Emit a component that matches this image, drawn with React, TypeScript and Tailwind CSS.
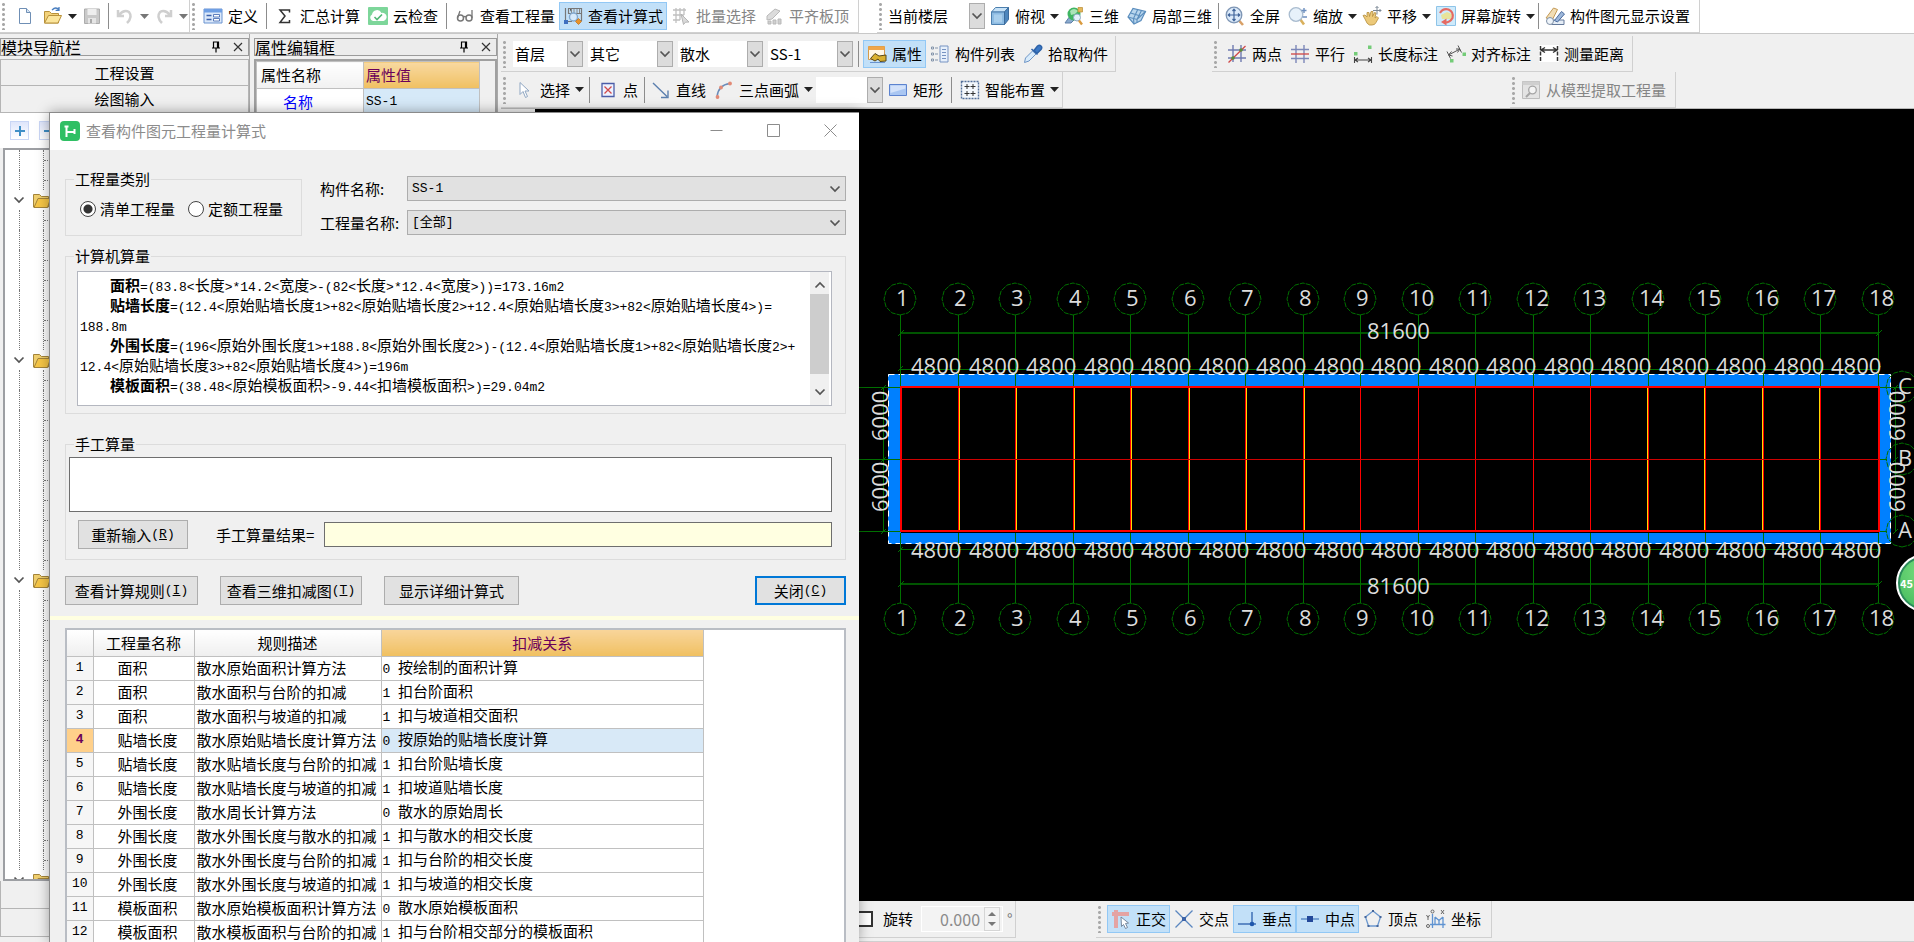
import { Fragment, type ReactNode } from "react";

/* ---------- icons (20 x 20 grid) ---------- */

const ICONS: Record<string, ReactNode> = {
  file: (
    <>
      <path d="M4.5 2.5h7l4 4v11h-11z" fill="#fff" stroke="#6f8fb5" />
      <path d="M11.5 2.5v4h4" fill="#d6e4f4" stroke="#6f8fb5" />
    </>
  ),
  folder: (
    <>
      <path d="M1.5 17V5.5h5l2 2h7V17z" fill="#f3d27a" stroke="#b8913a" />
      <path d="M1.5 17l4-7.5h13L15 17z" fill="#fbe59b" stroke="#b8913a" />
      <path d="M9 4q4-4 7 0m0-3v3.4h-3.4" fill="none" stroke="#4a7fc0" strokeWidth="1.3" />
    </>
  ),
  save: (
    <>
      <path d="M2.5 3h15v14.500h-15z" fill="#c9c9c9" stroke="#adadad" />
      <path d="M5.500 3h9v6h-9z" fill="#eee" />
      <path d="M6 12h8v5.500H6z" fill="#e6e6e6" />
      <path d="M8 13h2v4H8z" fill="#aaa" />
    </>
  ),
  undo: <path d="M3 4v6h6M4 9q5-6 10-3 4 5-2 11" fill="none" stroke="#cfcfcf" strokeWidth="2.500" />,
  redo: <path d="M17 4v6h-6M16 9Q11 3 6 6q-4 5 2 11" fill="none" stroke="#cfcfcf" strokeWidth="2.500" />,
  define: (
    <>
      <path d="M1 3h18v14H1z" fill="#dce9fa" stroke="#6a93d0" />
      <path d="M1 3h18v3.500H1z" fill="#6f9fe4" />
      <path d="M3.500 9.500h5m-5 4h5" stroke="#3b62ad" strokeWidth="1.600" />
      <path d="M10.500 8.500h6v2.500h-6zm0 4h6V15h-6z" fill="#fff" stroke="#3b62ad" strokeWidth=".8" />
    </>
  ),
  sigma: <path d="M14.500 6.500V4H5l5 6-5 6.500h9.500V14" fill="none" stroke="#333" strokeWidth="1.500" />,
  cloud: (
    <>
      <rect x="0" y="1" width="20" height="18" rx="1" fill="#7dd69a" />
      <path d="M5 15a3.500 3.500 0 0 1-1-6.500A5 5 0 0 1 13.500 7 4 4 0 0 1 15.500 15z" fill="#fff" />
      <path d="M6.500 11l2.500 2.500 5-5" fill="none" stroke="#53b877" strokeWidth="1.600" />
    </>
  ),
  glasses: (
    <>
      <circle cx="5.500" cy="12" r="3" fill="none" stroke="#777" strokeWidth="1.500" />
      <circle cx="14" cy="12" r="3" fill="none" stroke="#777" strokeWidth="1.500" />
      <path d="M2.500 12L5 5m3.500 6q1.500-1 2.500 0m6 1V4" fill="none" stroke="#777" strokeWidth="1.300" />
    </>
  ),
  viewcalc: (
    <>
      <path d="M2.500 2v15M1 15.500h8M5.500 2.500h13v5h-13zM18.500 7v8" fill="none" stroke="#777" strokeWidth="1.200" />
      <path d="M7 3h1.500v4M11 3v4m3-4v4m2.500-4v4" stroke="#8a8a8a" />
      <circle cx="10.500" cy="11" r="4" fill="#d7eafc" stroke="#84a9cf" strokeWidth="1.400" />
      <path d="M1 14h4v4H1z" fill="#3f6fc0" />
      <path d="M15.500 12.500l3 3-3 3-3-3z" fill="#e8922a" stroke="#b96a12" strokeWidth=".7" />
    </>
  ),
  batch: (
    <>
      <path d="M2 4h13M2 9h11M2 14h7M5 2v15m4-15v12m4-12v7" stroke="#c0c0c0" strokeWidth="1.300" />
      <path d="M10 8l8 8-3.500.2-2 2.300z" fill="#dadada" stroke="#b5b5b5" />
    </>
  ),
  align: (
    <>
      <path d="M3 10l8-7 5 2-8 8-5 1z" fill="#dcdcdc" stroke="#b9b9b9" />
      <path d="M4 15h3v3H4zm5-1h3v4H9zm5-1h3v5h-3z" fill="#cfcfcf" stroke="#b9b9b9" />
    </>
  ),
  cube: (
    <>
      <path d="M1.500 6l4-4.500h13l-4 4.500z" fill="#c7e2f7" stroke="#4c7fae" />
      <path d="M1.500 6h13v12.500h-13z" fill="#8dbbe2" stroke="#4c7fae" />
      <path d="M14.500 6l4-4.500v12l-4 5z" fill="#4d86bd" stroke="#3c6c9d" />
      <path d="M4 8.500h8v8H4z" fill="#b3d5f1" opacity=".7" />
    </>
  ),
  orbit: (
    <>
      <path d="M1 17l5-7 4 4-3 3z" fill="#8aaace" stroke="#5f7fa8" />
      <circle cx="10" cy="8" r="6.500" fill="#3fb562" />
      <path d="M6 5q4-4 8 0l-3 3-4 1z" fill="#a9e3b7" />
      <circle cx="13" cy="11.500" r="3.500" fill="#e3f1fb" stroke="#8fa9c2" />
      <path d="M15 14.500l3 4" stroke="#d99a3d" strokeWidth="2.400" />
      <path d="M14 1.500h4.500V6H14z" fill="#e4b85c" stroke="#b98a30" strokeWidth=".7" />
    </>
  ),
  part3d: (
    <>
      <path d="M1 11l5-8.500 12.500 3L14 14.500 7 18z" fill="#b9d6ee" stroke="#5a8dbd" strokeWidth="1.200" />
      <path d="M10.500 4l-4 8.500L7 18M1 11l9 2.500 8.500-8M14.500 4.500L10 13.500v3M3.500 7l10 3" fill="none" stroke="#5a8dbd" strokeWidth="1.100" />
    </>
  ),
  full: (
    <>
      <path d="M13.500 14l4.500 5" stroke="#d9a066" strokeWidth="2.600" />
      <circle cx="9" cy="9" r="7.800" fill="#dbeafa" stroke="#7d95b4" strokeWidth="1.300" />
      <path d="M9 3.500v11M3.500 9h11M7.500 5L9 3.200 10.500 5M7.500 13L9 14.800 10.500 13M5 7.500L3.200 9 5 10.500M13 7.500L14.800 9 13 10.500" fill="none" stroke="#41659b" strokeWidth="1.200" />
    </>
  ),
  zoom: (
    <>
      <path d="M12 13l4 5.500" stroke="#d9b05c" strokeWidth="2.600" />
      <circle cx="8" cy="8.500" r="6.800" fill="#e7f1fa" stroke="#a9bccf" strokeWidth="1.300" />
      <path d="M16 2v5m-2.500-2.500h5M14.500 11H19" stroke="#6d8fbf" strokeWidth="1.400" />
    </>
  ),
  pan: (
    <>
      <path d="M3 13L1 9.500l2-.5 2 2V6.500h2l.5 4 1.500-5h2l-.500 5 2-4 1.500.5-1 5 2-1.500 1.500 1.500-2.500 4.500q-1 2.500-4 2.500H7.500Q5 18.500 3 13z" fill="#ecc979" stroke="#b48d3c" strokeWidth=".8" />
      <path d="M15 .5v8M11 4.500h8M13.500 2L15 .5 16.500 2M17.500 3L19 4.500 17.500 6" fill="none" stroke="#7b8794" />
    </>
  ),
  rotate: (
    <>
      <path d="M.5.5h19v19H.5z" fill="#cfeafb" stroke="#8ec4e8" />
      <path d="M5 9l6-3 5 2-1 5H6z" fill="#e8e39a" />
      <path d="M4 7Q7 2 12.500 3.500 18 6 16.500 12 14 16.500 9 16.500" fill="none" stroke="#e66a62" strokeWidth="2.200" />
      <path d="M10.500 12.500v7L5 16z" fill="#e66a62" />
    </>
  ),
  display: (
    <>
      <path d="M1 12L8.500 2l4 1.500-5 10z" fill="#f2ddb4" stroke="#c39a57" />
      <path d="M6.500 14H19v4.500H6.500z" fill="#e5edf6" stroke="#64799a" />
      <path d="M9.500 14.500l7-9 3 2.500-7 8z" fill="#9db7da" stroke="#4c6c9e" />
      <circle cx="5" cy="15" r="3.500" fill="#eef4fa" stroke="#7e8fa5" />
    </>
  ),
  props: (
    <>
      <path d="M1.500 2.500h16v13h-16z" fill="#fff7e6" stroke="#d59b4b" />
      <path d="M1.500 2.500h16V6h-16z" fill="#f0a64a" />
      <path d="M3.500 14.500l4.500-5 4 2.500 7-1v6l-6 .5-2-2.500-3 2z" fill="#d9b02f" stroke="#57481a" />
      <path d="M3 18.500h15" stroke="#6a94cf" />
    </>
  ),
  list: (
    <>
      <path d="M10 2h8v16h-8z" fill="#e7f0fb" stroke="#7793c2" />
      <path d="M12 5.500h4m-4 3h4m-4 3h4m-4 3h4" stroke="#7793c2" />
      <path d="M1.500 3h2v2h-2zm0 6h2v2h-2zm0 6h2v2h-2zM5 4h3m-3 6h3m-3 6h3" fill="none" stroke="#8394ab" />
    </>
  ),
  picker: (
    <>
      <path d="M1.500 18.500l1-4.500 7-7 3.500 3-7 7z" fill="#d8ebfb" stroke="#6e95c6" />
      <path d="M8.500 5l6 5.500M11 6.500l3.500-4.500q2-1.500 3.500 0t0 3.500L14 9.500z" fill="#3b78c5" stroke="#2d62a8" strokeWidth="1.500" />
    </>
  ),
  twopoint: (
    <>
      <path d="M6 1v17m8-17v17M1 6h18M1 14h18" stroke="#6f7bb0" strokeWidth="1.400" />
      <path d="M1.500 18.500L18.500 2" stroke="#cf4747" strokeWidth="1.300" />
      <circle cx="6" cy="14" r="1.800" fill="#5a8c3a" />
      <circle cx="14" cy="6" r="1.800" fill="#5a8c3a" />
    </>
  ),
  parallel: (
    <>
      <path d="M6 1v18m8-18v18M1 5.500h18M1 14.500h18" stroke="#7c87b8" strokeWidth="1.400" />
      <path d="M1 10h18" stroke="#d04f4f" strokeWidth="1.400" />
    </>
  ),
  length: (
    <>
      <path d="M1 8h3.500v3.500H1zM15 1.500h3.500V5H15z" fill="#74cc78" />
      <path d="M1.500 13v6m17-6v6M2 16h16M5 14l-3 2 3 2m10-4l3 2-3 2" fill="none" stroke="#444" strokeWidth="1.100" />
    </>
  ),
  aligned: (
    <>
      <path d="M1 7.500l3.500 7M12 1.500l3.500 7M2.500 11L14 5M5.500 7.500l-3 3.500 4 1M10 5l4 0-2.500 3.500" fill="none" stroke="#555" />
      <path d="M4 15h3.500v3.500H4zM16.500 8.500H20V12h-3.500z" fill="#74cc78" />
    </>
  ),
  measure: (
    <>
      <path d="M0 1h20v17H0z" fill="#fff" />
      <path d="M1.500 2v16m17-16v16" stroke="#333" strokeWidth="1.500" strokeDasharray="4 1.500" />
      <path d="M2 6h16M6 3.500L2 6l4 2.500m8-5L18 6l-4 2.500" fill="none" stroke="#333" strokeWidth="1.400" />
    </>
  ),
  cursor: <path d="M5 2.500v12l3-3 2.500 6 2-1-2.500-5.500h4z" fill="#fff" stroke="#8fa6c2" />,
  point: (
    <>
      <path d="M4 3.500h12v13H4z" fill="#eef2ff" stroke="#4b5da8" strokeWidth="1.300" />
      <path d="M6.500 6.500l7 7m0-7l-7 7" stroke="#d24a4a" strokeWidth="1.300" />
    </>
  ),
  line: <path d="M2 3l14 13.500M17 10.500V17.500H10" fill="none" stroke="#5b7fae" strokeWidth="1.400" />,
  arc: (
    <>
      <path d="M3 17Q4 5 16 3.500" fill="none" stroke="#6a8bb8" strokeWidth="1.500" />
      <circle cx="3.500" cy="17" r="1.900" fill="#e28a76" />
      <circle cx="7" cy="7.500" r="1.900" fill="#e28a76" />
      <circle cx="16" cy="3.500" r="1.900" fill="#e28a76" />
    </>
  ),
  rect: (
    <>
      <path d="M1.500 4.500h17v11h-17z" fill="#a9c6f2" stroke="#5c83cf" />
      <path d="M2.500 5.500h15v3L2.500 13z" fill="#d3e2fa" />
    </>
  ),
  smart: (
    <>
      <path d="M1.500 1.500h17v17h-17z" fill="#f4f8fd" stroke="#55719b" strokeWidth="1.400" strokeDasharray="2 1" />
      <path d="M7 4v5m-2.500-2.500h5M13 4v5m-2.500-2.500h5M7 11v5m-2.500-2.500h5M13 11v5m-2.500-2.500h5" stroke="#333" />
    </>
  ),
  extract: (
    <>
      <path d="M1.500 1.500h17v17h-17z" fill="#e3e3e3" stroke="#bdbdbd" />
      <path d="M1.500 1.500h17V5h-17z" fill="#cfcfcf" />
      <circle cx="11.500" cy="10" r="3.800" fill="#f4f4f4" stroke="#a5a5a5" strokeWidth="1.300" />
      <path d="M9 13l-4 4" stroke="#a5a5a5" strokeWidth="2" />
    </>
  ),
  ortho: (
    <>
      <path d="M1 5h17M5 1v18" stroke="#e4a3a3" strokeWidth="4" />
      <path d="M10 8l7.500 6-3 .5 2 4-2 1-2-4-2 2z" fill="#fff" stroke="#6c7c92" strokeWidth=".9" />
    </>
  ),
  cross: (
    <>
      <path d="M1.500 1.500l17 17M18.500 1.500l-17 17" stroke="#5b87c0" strokeWidth="1.300" />
      <path d="M8 8h4v4H8z" fill="#3d64a8" />
    </>
  ),
  perp: (
    <>
      <path d="M1 15h18M15 3v12" stroke="#3f6fb5" strokeWidth="1.500" />
      <circle cx="15" cy="15" r="2.300" fill="#1f57ad" />
    </>
  ),
  mid: (
    <>
      <path d="M1 10h18" stroke="#5080c0" strokeWidth="1.300" />
      <path d="M7 7h6v6H7z" fill="#23489a" />
    </>
  ),
  vertex: (
    <>
      <path d="M10 2l7.500 6-3 9h-9l-3-9z" fill="none" stroke="#6c98cf" strokeWidth="1.300" />
      <path d="M9 1h2v2H9zM1.500 7h2v2h-2zm15 0h2v2h-2zM4.500 16h2v2h-2zm9 0h2v2h-2z" fill="#44659a" />
    </>
  ),
  coord: (
    <>
      <path d="M6.500 5v14M4 15.500h15.500M9 8l4 3.500L17 8M13 11.500v4M9 8v8m8-8v11" fill="none" stroke="#5f93d1" strokeWidth="1.300" />
      <circle cx="6.500" cy="2.500" r="1.500" fill="none" stroke="#666" />
      <circle cx="2" cy="17" r="1.500" fill="none" stroke="#666" />
      <path d="M15 1l3 4m0-4l-3 4M.5 6L2 8.500 3.500 6M2 8.500V11" stroke="#666" fill="none" />
    </>
  ),
};

function Icon({ name }: { name: string }) {
  return (
    <svg viewBox="0 0 20 20" className="size-5 shrink-0" aria-hidden="true">
      {ICONS[name]}
    </svg>
  );
}

function Caret({ dim = false }: { dim?: boolean }) {
  return (
    <svg viewBox="0 0 9 5" className="h-[5px] w-[9px] shrink-0" aria-hidden="true">
      <path d="M0 0h9L4.500 5z" fill={dim ? "#777" : "#222"} />
    </svg>
  );
}

function Chevron() {
  return (
    <svg viewBox="0 0 12 8" className="h-2 w-3 shrink-0" aria-hidden="true">
      <path d="M1.500 1.500L6 6l4.500-4.500" fill="none" stroke="#555" strokeWidth="1.700" />
    </svg>
  );
}

/* ---------- toolbar pieces ---------- */

const Grip = () => <span className="mx-[2px] h-7 w-[3px] shrink-0 bg-[radial-gradient(circle,#a8a8a8_1px,transparent_2px)] bg-[length:3px_5px]" />;

function Sep({ tight = false }: { tight?: boolean }) {
  return <span className={`h-[26px] w-px shrink-0 bg-[#8c8c8c] ${tight ? "mx-[2px]" : "mx-1"}`} />;
}

function Tool({ icon, label, active, disabled, menu }: { icon: string; label?: string; active?: boolean; disabled?: boolean; menu?: boolean }) {
  const tone = active ? "bg-[#c2e0f8] border-[#92c8f5]" : "border-transparent";
  return (
    <button
      type="button"
      disabled={disabled}
      aria-label={label ?? icon}
      className={`flex h-7 shrink-0 items-center gap-[5px] border pl-[3px] ${menu ? "pr-0" : "pr-[3px]"} ${tone} ${disabled ? "text-[#858585]" : "text-black"}`}
    >
      <Icon name={icon} />
      {label && <span>{label}</span>}
      {menu && <Caret dim={disabled} />}
    </button>
  );
}

function Combo({ label, options, width }: { label: string; options: string[]; width: string }) {
  return (
    <div className={`relative mr-[5px] flex h-[26px] shrink-0 bg-white ${width}`}>
      <select aria-label={label} className="min-w-0 flex-1 appearance-none bg-transparent pl-[2px] outline-none">
        {options.map((o) => (
          <option key={o}>{o}</option>
        ))}
      </select>
      <span className="pointer-events-none flex w-4 shrink-0 items-center justify-center border border-[#adadad] bg-[#dcdcdc]">
        <Chevron />
      </span>
    </div>
  );
}

function Bar({ children, className = "" }: { children: ReactNode; className?: string }) {
  return <div className={`flex shrink-0 items-center border-r border-b border-[#d0d0d0] ${className}`}>{children}</div>;
}

function TopToolbar() {
  return (
    <div role="toolbar" aria-label="主工具栏" className="flex h-[34px] shrink-0 border-b border-[#c8c8c8] bg-white">
      <Bar className="w-[190px]">
        <Grip />
        <span className="w-1" />
        <Tool icon="file" />
        <Tool icon="folder" menu />
        <Tool icon="save" disabled />
        <Sep tight />
        <Tool icon="undo" disabled menu />
        <Tool icon="redo" disabled menu />
      </Bar>
      <Bar className="w-[669px]">
        <Grip />
        <span className="w-[2px]" />
        <Tool icon="define" label="定义" />
        <Sep />
        <Tool icon="sigma" label="汇总计算" />
        <Tool icon="cloud" label="云检查" />
        <Sep />
        <Tool icon="glasses" label="查看工程量" />
        <Tool icon="viewcalc" label="查看计算式" active />
        <Tool icon="batch" label="批量选择" disabled />
        <Tool icon="align" label="平齐板顶" disabled />
      </Bar>
      <Bar className="ml-[18px] w-[823px]">
        <Grip />
        <span className="w-[2px]" />
        <Combo label="楼层范围" options={["当前楼层", "全部楼层"]} width="w-[99px]" />
        <div className="-ml-1 flex items-center">
          <Tool icon="cube" label="俯视" menu />
          <Tool icon="orbit" label="三维" />
          <Tool icon="part3d" label="局部三维" />
          <Sep tight />
          <Tool icon="full" label="全屏" />
          <Tool icon="zoom" label="缩放" menu />
          <Tool icon="pan" label="平移" menu />
          <Tool icon="rotate" label="屏幕旋转" menu />
          <Sep tight />
          <Tool icon="display" label="构件图元显示设置" />
        </div>
      </Bar>
    </div>
  );
}

function CanvasToolbars() {
  return (
    <div className="flex shrink-0 flex-col bg-[#f0f0f0]">
      <div role="toolbar" aria-label="构件工具栏" className="mt-[2px] flex h-[36px]">
        <Bar className="w-[615px]">
          <Grip />
          <span className="w-[5px]" />
          <Combo label="楼层" options={["首层"]} width="w-[70px]" />
          <Combo label="类别" options={["其它"]} width="w-[85px]" />
          <Combo label="类型" options={["散水"]} width="w-[85px]" />
          <Combo label="构件" options={["SS-1"]} width="w-[85px]" />
          <span className="mr-1 h-[26px] w-px bg-[#8c8c8c]" />
          <Tool icon="props" label="属性" active />
          <Tool icon="list" label="构件列表" />
          <Tool icon="picker" label="拾取构件" />
        </Bar>
        <Bar className="ml-[96px] w-[421px]">
          <Grip />
          <span className="w-1" />
          <Tool icon="twopoint" label="两点" />
          <Tool icon="parallel" label="平行" />
          <Tool icon="length" label="长度标注" />
          <Tool icon="aligned" label="对齐标注" />
          <Tool icon="measure" label="测量距离" />
        </Bar>
      </div>
      <div role="toolbar" aria-label="绘图工具栏" className="flex h-[37px] border-b border-[#b8b8b8]">
        <Bar className="w-[562px]">
          <Grip />
          <span className="w-[3px]" />
          <Tool icon="cursor" label="选择" menu />
          <Sep />
          <Tool icon="point" label="点" />
          <Sep tight />
          <Tool icon="line" label="直线" />
          <Tool icon="arc" label="三点画弧" menu />
          <Combo label="画弧方式" options={[""]} width="ml-[2px] w-[67px]" />
          <div className="-ml-1 flex items-center">
            <Tool icon="rect" label="矩形" />
            <Sep />
            <Tool icon="smart" label="智能布置" menu />
          </div>
        </Bar>
        <Bar className="ml-[447px] w-[166px]">
          <Grip />
          <Tool icon="extract" label="从模型提取工程量" disabled />
        </Bar>
      </div>
    </div>
  );
}

/* ---------- left docks ---------- */

function DockTitle({ children }: { children: string }) {
  return (
    <div className="flex h-[18px] shrink-0 items-center gap-3 border border-[#9b9b9b] bg-[#ececec] pr-[5px]">
      <h2 className="flex-1 text-base leading-4">{children}</h2>
      <button type="button" aria-label="固定">
        <svg viewBox="0 0 10 12" className="h-3 w-[10px]">
          <path d="M2.500 1h5v6h-5zM1 7h8M5 7v4.500M6.500 1v6" fill="none" stroke="#000" strokeWidth="1.200" />
        </svg>
      </button>
      <button type="button" aria-label="关闭面板">
        <svg viewBox="0 0 10 10" className="size-[10px]">
          <path d="M1 1l8 8M9 1L1 9" stroke="#333" strokeWidth="1.200" />
        </svg>
      </button>
    </div>
  );
}

function TreeFolder() {
  return (
    <li className="flex h-5 items-center">
      <span className="mx-2 flex w-3 justify-center">
        <Chevron />
      </span>
      <svg viewBox="0 0 18 15" className="h-[15px] w-[18px] shrink-0" aria-hidden="true">
        <path d="M.5 14V1.500h6l2 2h7V14z" fill="#f0cf6e" stroke="#a5853a" />
        <path d="M1 14.500l4-9h12.500l-3 9z" fill="#f6c646" stroke="#a5853a" />
      </svg>
    </li>
  );
}

function TreeLeaves({ count }: { count: number }) {
  return (
    <>
      {Array.from({ length: count }, (_, i) => (
        <li key={i} className="ml-[14px] flex h-5 border-l border-dotted border-[#777]">
          <span className="ml-[23px] h-full border-l border-dotted border-[#777]" />
          <span className="mt-[10px] h-px w-3 border-t border-dotted border-[#777]" />
        </li>
      ))}
    </>
  );
}

const TREE_GROUPS = [7, 10, 14];

function PlusBox({ minus = false }: { minus?: boolean }) {
  return (
    <button type="button" aria-label={minus ? "折叠" : "展开"} className="flex size-[19px] items-center justify-center border border-[#c9d6f5] bg-linear-to-b from-[#dfe6fb] to-white">
      <svg viewBox="0 0 12 12" className="size-3">
        <path d={minus ? "M1 6h10" : "M1 6h10M6 1v10"} stroke="#3f8fc6" strokeWidth="2" />
      </svg>
    </button>
  );
}

function NavDock() {
  return (
    <aside className="flex w-[250px] shrink-0 flex-col border-r border-[#a9a9a9] pt-[4px]">
      <DockTitle>模块导航栏</DockTitle>
      <button type="button" className="mt-[3px] h-[27px] shrink-0 border border-[#b5b5b5] bg-[#f0f0f0]">
        工程设置
      </button>
      <button type="button" className="h-[27px] shrink-0 border border-t-0 border-[#b5b5b5] bg-[#f0f0f0]">
        绘图输入
      </button>
      <div className="flex h-[35px] shrink-0 gap-[10px] bg-white pt-2 pl-[10px]">
        <PlusBox />
        <PlusBox minus />
      </div>
      <ul className="ml-[3px] min-h-0 flex-1 overflow-hidden border-2 border-[#9d9fa3] bg-white">
        <TreeLeaves count={2} />
        {TREE_GROUPS.map((n, i) => (
          <Fragment key={i}>
            <TreeFolder />
            <TreeLeaves count={n} />
          </Fragment>
        ))}
        <TreeFolder />
      </ul>
      <div className="h-7 shrink-0 border border-t-0 border-[#b5b5b5]" />
      <div className="h-7 shrink-0 border border-t-0 border-[#b5b5b5]" />
      <div className="h-[5px] shrink-0" />
    </aside>
  );
}

function PropertyDock() {
  return (
    <aside className="ml-1 flex w-[244px] shrink-0 flex-col border-r border-[#a9a9a9] pt-[4px]">
      <DockTitle>属性编辑框</DockTitle>
      <div className="mt-[3px] flex-1 border-2 border-[#a0a0a0] bg-[#f0f0f0]">
        <table className="w-[224px] table-fixed border-collapse bg-white text-left">
          <thead>
            <tr className="h-[27px]">
              <th className="w-[107px] border border-[#c0c0c0] bg-linear-to-b from-white to-[#f1f1f1] pl-1 font-normal">属性名称</th>
              <th className="border border-[#c0c0c0] bg-linear-to-b from-[#f8d9a0] to-[#f0c060] pl-[2px] font-normal text-[#6a005a]">属性值</th>
            </tr>
          </thead>
          <tbody>
            <tr className="h-[26px]">
              <td className="border border-[#c0c0c0] pl-[26px] text-[#0000ff]">名称</td>
              <td className="border border-[#c0c0c0] bg-[#d6e9f8] pl-[2px] font-['Liberation_Mono',monospace] text-[13px]">SS-1</td>
            </tr>
          </tbody>
        </table>
      </div>
    </aside>
  );
}

/* ---------- drawing ---------- */

const AXES = Array.from({ length: 18 }, (_, i) => ({ n: i + 1, x: Math.round(900.3 + i * 57.5) }));
const ROWS = [
  { name: "C", y: 387 },
  { name: "B", y: 459 },
  { name: "A", y: 531 },
];

function dodecagon(cx: number, cy: number) {
  return Array.from({ length: 12 }, (_, k) => {
    const a = (k * Math.PI) / 6;
    return `${(cx + 16 * Math.sin(a)).toFixed(1)},${(cy + 16 * Math.cos(a)).toFixed(1)}`;
  }).join(" ");
}

function Drawing() {
  return (
    <svg className="absolute inset-0 h-full w-full" fill="none" role="img" aria-label="散水平面图">
      <g transform="translate(-535 -109)">
        <path d="M888 374H1891V544H888zM901 387V533H1879V387z" fill="#0080ff" fillRule="evenodd" />
        <path d="M888.500 374.500H1890.500V543.500H888.500z" stroke="#fff" strokeDasharray="6 4" />

        <g stroke="#007000">
          {AXES.map(({ n, x }) => (
            <Fragment key={n}>
              <path d={`M${x}.5 315V387M${x}.5 533V603`} />
              <path d={`M${x - 2} 371l5-5M${x - 2} 552l5-5`} />
              <polygon points={dodecagon(x, 299)} strokeDasharray="5 1" />
              <polygon points={dodecagon(x, 619)} strokeDasharray="5 1" />
            </Fragment>
          ))}
          <path d="M901 333H1879M901 584H1879" strokeWidth="1.500" />
          <path d="M901 369.500H1879M901 549.500H1879" />
          <path d="M898 336l6-6M1876 336l6-6M898 587l6-6M1876 587l6-6" />
          <path d="M883.500 387V531M1895.500 387V531" />
          {ROWS.map(({ name, y }) => (
            <Fragment key={name}>
              <path d={`M859 ${y}.5H901M1879 ${y}.5H1887M881 ${y + 3}l5-5M1893 ${y + 3}l5-5`} />
              <polygon points={dodecagon(1902, y)} strokeDasharray="5 1" />
            </Fragment>
          ))}
          <path d="M1887 387.500H1914" />
        </g>

        {AXES.slice(1, 17).map(({ n, x }) => (
          <Fragment key={n}>
            {n <= 8 && <path d={`M${x + 1}.5 387V530`} stroke="#ffd800" />}
            {n >= 14 && <path d={`M${x - 1}.5 387V530`} stroke="#ffd800" />}
            <path d={`M${x}.5 387V530`} stroke="#ff0000" />
          </Fragment>
        ))}
        <path d="M901 387H1879V531H901z" stroke="#f00" strokeWidth="2" />
        <path d="M901 459.500H1879" stroke="#d00000" />

        <g fill="#dcdcdc" fontFamily="'Open Sans','Noto Sans',sans-serif" fontSize="22">
          {AXES.map(({ n, x }) => (
            <Fragment key={n}>
              <text x={n < 10 ? x - 4 : x - 9} y="306">{n}</text>
              <text x={n < 10 ? x - 4 : x - 9} y="626">{n}</text>
              {n < 18 && (
                <>
                  <text x={x + 11} y="374">4800</text>
                  <text x={x + 11} y="558">4800</text>
                </>
              )}
            </Fragment>
          ))}
          <text x="1367" y="339">81600</text>
          <text x="1367" y="594">81600</text>
          {ROWS.map(({ name, y }) => (
            <text key={name} x="1898" y={y + 7}>{name}</text>
          ))}
          <text transform="translate(888 441) rotate(-90)">6000</text>
          <text transform="translate(888 512) rotate(-90)">6000</text>
          <text transform="translate(1905 441) rotate(-90)">6000</text>
          <text transform="translate(1905 512) rotate(-90)">6000</text>
        </g>
      </g>
    </svg>
  );
}

function StatusBar() {
  return (
    <div className="flex h-[41px] shrink-0 border-b border-[#d0d0d0] bg-[#f0f0f0] pb-[3px]">
      <Bar className="w-[515px] pl-[356px]">
        <label className="flex items-center gap-[10px]">
          <input type="checkbox" className="size-4 appearance-none border-2 border-[#333] bg-white" />
          旋转
        </label>
        <div className="ml-2 flex h-[26px] w-[82px] border border-white bg-[#f3f3f3]">
          <input aria-label="旋转角度" defaultValue="0.000" disabled className="w-[62px] bg-transparent pr-1 text-right text-base text-[#8a8a8a]" />
          <span className="flex w-4 flex-col items-center justify-center gap-[6px] border border-[#d5d5d5]">
            <svg viewBox="0 0 8 4" className="h-1 w-2"><path d="M0 4h8L4 0z" fill="#777" /></svg>
            <svg viewBox="0 0 8 4" className="h-1 w-2"><path d="M0 0h8L4 4z" fill="#777" /></svg>
          </span>
        </div>
        <span className="ml-1 text-[#777]">°</span>
      </Bar>
      <Bar className="ml-[80px] w-[396px]">
        <Grip />
        <span className="w-1" />
        <Tool icon="ortho" label="正交" active />
        <Tool icon="cross" label="交点" />
        <Tool icon="perp" label="垂点" active />
        <Tool icon="mid" label="中点" active />
        <Tool icon="vertex" label="顶点" />
        <Tool icon="coord" label="坐标" />
      </Bar>
    </div>
  );
}

/* ---------- dialog ---------- */

const RULES: [string, string, string][] = [
  ["面积", "散水原始面积计算方法", "0 按绘制的面积计算"],
  ["面积", "散水面积与台阶的扣减", "1 扣台阶面积"],
  ["面积", "散水面积与坡道的扣减", "1 扣与坡道相交面积"],
  ["贴墙长度", "散水原始贴墙长度计算方法", "0 按原始的贴墙长度计算"],
  ["贴墙长度", "散水贴墙长度与台阶的扣减", "1 扣台阶贴墙长度"],
  ["贴墙长度", "散水贴墙长度与坡道的扣减", "1 扣坡道贴墙长度"],
  ["外围长度", "散水周长计算方法", "0 散水的原始周长"],
  ["外围长度", "散水外围长度与散水的扣减", "1 扣与散水的相交长度"],
  ["外围长度", "散水外围长度与台阶的扣减", "1 扣与台阶的相交长度"],
  ["外围长度", "散水外围长度与坡道的扣减", "1 扣与坡道的相交长度"],
  ["模板面积", "散水原始模板面积计算方法", "0 散水原始模板面积"],
  ["模板面积", "散水模板面积与台阶的扣减", "1 扣与台阶相交部分的模板面积"],
];
const SELECTED_RULE = 3;

const FORMULAS: { name?: string; text: string }[] = [
  { name: "面积", text: "=(83.8<长度>*14.2<宽度>-(82<长度>*12.4<宽度>))=173.16m2" },
  { name: "贴墙长度", text: "=(12.4<原始贴墙长度1>+82<原始贴墙长度2>+12.4<原始贴墙长度3>+82<原始贴墙长度4>)=" },
  { text: "188.8m" },
  { name: "外围长度", text: "=(196<原始外围长度1>+188.8<原始外围长度2>)-(12.4<原始贴墙长度1>+82<原始贴墙长度2>+" },
  { text: "12.4<原始贴墙长度3>+82<原始贴墙长度4>)=196m" },
  { name: "模板面积", text: "=(38.48<原始模板面积>-9.44<扣墙模板面积>)=29.04m2" },
];

/* Sets the half-width characters of a mixed string in the monospaced face. */
function Mixed({ children }: { children: string }) {
  return (
    <>
      {children.split(/([\x20-\x7e]+)/).map((part, i) =>
        i % 2 ? (
          <span key={i} className="font-['Liberation_Mono',monospace] text-[13px]">{part}</span>
        ) : (
          part
        ),
      )}
    </>
  );
}

function Group({ title, className, children }: { title: string; className: string; children: ReactNode }) {
  return (
    <fieldset className={`min-w-0 border border-[#dcdcdc] ${className}`}>
      <legend className="ml-2 h-5 px-px leading-5">{title}</legend>
      {children}
    </fieldset>
  );
}

function Push({ label, hotkey, className = "border border-[#adadad]" }: { label: string; hotkey?: string; className?: string }) {
  return (
    <button type="button" className={`flex h-[29px] shrink-0 items-center justify-center bg-[#e1e1e1] ${className}`}>
      {label}
      {hotkey && (
        <span className="font-['Liberation_Mono',monospace] text-[13px]">
          (<u>{hotkey}</u>)
        </span>
      )}
    </button>
  );
}

function Field({ id, label, value }: { id: string; label: string; value: string }) {
  return (
    <div className="flex items-center">
      <label htmlFor={id} className="w-[87px] shrink-0">{label}:</label>
      <div className="relative flex h-[25px] min-w-0 flex-1">
        <select id={id} className="flex-1 appearance-none border border-[#adadad] bg-[#e1e1e1] pl-1 font-['Liberation_Mono','Noto_Sans_CJK_SC',monospace] text-[13px] outline-none">
          <option>{value}</option>
        </select>
        <span className="pointer-events-none absolute top-[9px] right-[5px] flex">
          <Chevron />
        </span>
      </div>
    </div>
  );
}

const RADIO = "size-4 appearance-none rounded-full border border-[#444] bg-white checked:bg-[radial-gradient(circle,#333_4px,#fff_5px)]";

function Dialog() {
  return (
    <section
      role="dialog"
      aria-label="查看构件图元工程量计算式"
      className="absolute top-[112px] bottom-0 left-[49px] flex w-[810px] flex-col overflow-hidden border-t border-l border-[#8a8a8a] bg-[#f0f0f0] shadow-[0_0_12px_rgba(0,0,0,0.35)]"
    >
      <header className="flex h-[37px] shrink-0 items-center gap-[6px] bg-white pb-[2px] pl-[10px] text-[#8c8c8c]">
        <svg viewBox="0 0 20 20" className="size-5" aria-hidden="true">
          <rect width="20" height="20" rx="4" fill="#2fbf64" />
          <path d="M6.500 5v11M4.500 5.500h4M6.500 11H15M14.500 8v5" fill="none" stroke="#fff" strokeWidth="2" />
        </svg>
        <h1 className="flex-1">查看构件图元工程量计算式</h1>
        <div className="mr-[22px] flex items-center gap-[44px]">
          {["M.5 6.500h12", "M.5.500h12v12H.5z", "M.5.500l12 12m0-12l-12 12"].map((d, i) => (
            <button key={d} type="button" aria-label={["最小化", "最大化", "关闭窗口"][i]}>
              <svg viewBox="0 0 13 13" className="size-[13px]">
                <path d={d} fill="none" stroke="#8c8c8c" />
              </svg>
            </button>
          ))}
        </div>
      </header>

      <div className="flex shrink-0 flex-col pr-[13px] pl-[15px]">
        <div className="mt-[19px] flex gap-[18px]">
          <Group title="工程量类别" className="h-[67px] w-[237px] shrink-0">
            <div className="flex gap-[13px] pt-[10px] pl-[14px]">
              <label className="flex items-center gap-1"><input type="radio" name="kind" defaultChecked className={RADIO} />清单工程量</label>
              <label className="flex items-center gap-1"><input type="radio" name="kind" className={RADIO} />定额工程量</label>
            </div>
          </Group>
          <div className="mt-[7px] flex min-w-0 flex-1 flex-col gap-[9px]">
            <Field id="component-name" label="构件名称" value="SS-1" />
            <Field id="quantity-name" label="工程量名称" value="[全部]" />
          </div>
        </div>

        <Group title="计算机算量" className="mt-[10px] h-[168px]">
          <div className="mt-[5px] mr-[13px] ml-[11px] flex h-[135px] border border-[#b4b7c0] bg-white">
            <div className="min-w-0 flex-1 overflow-hidden pt-[3px] pl-[2px] whitespace-nowrap">
              {FORMULAS.map(({ name, text }) => (
                <p key={text} className={`h-5 leading-5 ${name ? "pl-[30px]" : ""}`}>
                  {name && <b>{name}</b>}
                  <Mixed>{text}</Mixed>
                </p>
              ))}
            </div>
            <div className="mr-[2px] flex w-[19px] shrink-0 flex-col items-center bg-[#f0f0f0] py-1" aria-hidden="true">
              <span className="flex h-[18px] rotate-180 items-center"><Chevron /></span>
              <span className="h-20 w-full bg-[#cdcdcd]" />
              <span className="mt-auto flex h-[18px] items-center"><Chevron /></span>
            </div>
          </div>
        </Group>

        <Group title="手工算量" className="mt-5 h-[126px]">
          <div className="mr-[13px] ml-[3px] flex flex-col gap-2">
            <textarea aria-label="手工算量" className="mt-[3px] h-[55px] resize-none border border-[#6e6e6e] bg-white" />
            <div className="flex items-center pl-[9px]">
              <Push label="重新输入" hotkey="R" className="w-[110px] border border-[#adadad]" />
              <label htmlFor="manual-result" className="ml-7 w-[108px]">手工算量结果=</label>
              <input id="manual-result" className="h-[25px] min-w-0 flex-1 border border-[#6e6e6e] bg-[#ffffe1]" />
            </div>
          </div>
        </Group>

        <div className="mt-4 flex gap-[22px]">
          <Push label="查看计算规则" hotkey="I" className="w-[133px] border border-[#adadad]" />
          <Push label="查看三维扣减图" hotkey="T" className="w-[142px] border border-[#adadad]" />
          <Push label="显示详细计算式" className="w-[135px] border border-[#adadad]" />
          <Push label="关闭" hotkey="C" className="ml-auto w-[91px] border-2 border-[#0078d7]" />
        </div>
      </div>

      <div className="mt-[11px] h-1 shrink-0 bg-[#ffffe1]" />

      <div className="mt-2 mr-[13px] ml-[15px] min-h-0 flex-1 overflow-hidden border-2 border-b-0 border-[#b9bdc4] bg-white">
        <table className="h-[311px] w-[637px] table-fixed border-collapse leading-5 whitespace-nowrap">
          <thead>
            <tr className="h-[26px]">
              <th className="w-[26px] border-r border-b border-[#c0c0c0] bg-linear-to-b from-white to-[#efefef] p-0" />
              <th className="w-[101px] border-r border-b border-[#c0c0c0] bg-linear-to-b from-white to-[#efefef] p-0 font-normal">工程量名称</th>
              <th className="w-[187px] border-r border-b border-[#c0c0c0] bg-linear-to-b from-white to-[#efefef] p-0 font-normal">规则描述</th>
              <th className="border-r border-b border-[#c0c0c0] bg-linear-to-b from-[#f8d59a] to-[#f0c060] p-0 font-normal text-[#6a005a]">扣减关系</th>
            </tr>
          </thead>
          <tbody>
            {RULES.map(([name, rule, relation], i) => (
              <tr key={rule}>
                <th scope="row" className={`border-r border-b border-[#c0c0c0] p-0 font-['Liberation_Mono',monospace] text-[13px] ${i === SELECTED_RULE ? "bg-[#ffd08a] font-bold text-[#6a005a]" : "bg-[#f6f6f6] font-normal"}`}>
                  {i + 1}
                </th>
                <td className="border-r border-b border-[#c0c0c0] py-0 pr-0 pl-6">{name}</td>
                <td className="border-r border-b border-[#c0c0c0] py-0 pr-0 pl-[2px]">{rule}</td>
                <td className={`border-r border-b border-[#c0c0c0] py-0 pr-0 pl-px ${i === SELECTED_RULE ? "bg-[#d8e9f7]" : ""}`}>
                  <Mixed>{relation}</Mixed>
                </td>
              </tr>
            ))}
          </tbody>
        </table>
      </div>
    </section>
  );
}

export default function App() {
  return (
    <div className="relative flex h-screen flex-col overflow-hidden bg-[#f0f0f0] font-['Noto_Sans_CJK_SC',sans-serif] text-[15px] leading-5 text-black">
      <TopToolbar />
      <div className="flex min-h-0 flex-1">
        <NavDock />
        <PropertyDock />
        <main className="ml-[3px] flex min-w-0 flex-1 flex-col">
          <CanvasToolbars />
          <div className="relative ml-[34px] min-h-0 flex-1 overflow-hidden bg-black">
            <Drawing />
            <button
              type="button"
              className="absolute top-[445px] -right-10 size-[58px] rounded-full border-3 border-white bg-[radial-gradient(circle_at_50%_30%,#7be07f,#3fb65a)] pl-px text-left text-[11px] font-bold text-white outline-2 -outline-offset-4 outline-[#2b8b5a]"
            >
              45
            </button>
          </div>
          <StatusBar />
        </main>
      </div>
      <Dialog />
    </div>
  );
}
